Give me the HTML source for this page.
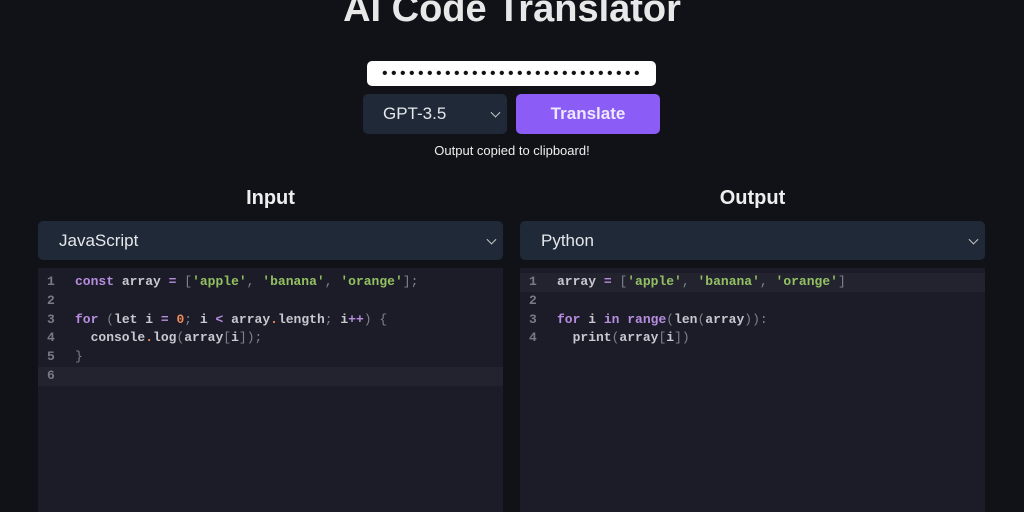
<!DOCTYPE html>
<html><head><style>
body{margin:0;width:1024px;height:512px;background:#111217;font-family:"Liberation Sans",sans-serif;color:#e5e5e5;overflow:hidden;position:relative}
.abs{position:absolute}
h1{position:absolute;top:-12px;left:0;width:1024px;text-align:center;margin:0;font-size:38px;font-weight:bold;color:#e8e8e8}
.key{left:367px;top:61px;width:289px;height:25px;background:#fff;border-radius:5px;color:#111;font-size:16px;line-height:25px;letter-spacing:3.4px;padding-left:15px;box-sizing:border-box;overflow:hidden;white-space:nowrap}
.sel{background:#1f2937;border-radius:5px;color:#e5e7eb;font-size:17px;box-sizing:border-box}
.chev{position:absolute;right:8px;top:50%;width:6px;height:6px;border-right:1.5px solid #ccc;border-bottom:1.5px solid #ccc;transform:translateY(-70%) rotate(45deg)}
.btn{left:516px;top:94px;width:144px;height:40px;background:#8b5cf6;border-radius:5px;color:#ede9fe;font-weight:bold;font-size:17px;text-align:center;line-height:40px}
.h2{font-size:20px;font-weight:bold;text-align:center;color:#eee}
.code{background:#1b1c27;font-family:"Liberation Mono",monospace;font-size:13px;font-weight:bold;color:#c8c8d0}
.ln{position:absolute;left:0;width:100%;height:18.8px;line-height:18.8px;white-space:pre}
.ln b{display:inline-block;width:37px;text-align:left;padding-left:9px;box-sizing:border-box;color:#7a7a84}
.k{color:#b78de0}.s{color:#93c062}.p{color:#7d828b;font-weight:normal}.n{color:#f08a5d}.o{color:#b78de0}
</style></head><body>
<h1>AI Code Translator</h1>
<div class="abs key">•••••••••••••••••••••••••••••</div>
<div class="abs sel" style="left:363px;top:94px;width:144px;height:40px;line-height:40px;padding-left:20px">GPT-3.5<span class="chev"></span></div>
<div class="abs btn">Translate</div>
<div class="abs" style="left:0;width:1024px;top:143px;text-align:center;font-size:13px;color:#eee">Output copied to clipboard!</div>

<div class="abs h2" style="left:38px;width:465px;top:187px">Input</div>
<div class="abs h2" style="left:520px;width:465px;top:187px">Output</div>
<div class="abs sel" style="left:38px;top:221px;width:465px;height:39px;line-height:39px;padding-left:21px">JavaScript<span class="chev"></span></div>
<div class="abs sel" style="left:520px;top:221px;width:465px;height:39px;line-height:39px;padding-left:21px">Python<span class="chev"></span></div>

<div class="abs code" style="left:38px;top:268px;width:465px;height:244px">
<div class="ln" style="top:5px"><b>1</b><span class="k">const</span> array <span class="o">=</span> <span class="p">[</span><span class="s">'apple'</span><span class="p">,</span> <span class="s">'banana'</span><span class="p">,</span> <span class="s">'orange'</span><span class="p">];</span></div>
<div class="ln" style="top:23.8px"><b>2</b></div>
<div class="ln" style="top:42.6px"><b>3</b><span class="k">for</span> <span class="p">(</span>let i <span class="o">=</span> <span class="n">0</span><span class="p">;</span> i <span class="o">&lt;</span> array<span class="n">.</span>length<span class="p">;</span> i<span class="o">++</span><span class="p">)</span> <span class="p">{</span></div>
<div class="ln" style="top:61.4px"><b>4</b>  console<span class="n">.</span>log<span class="p">(</span>array<span class="p">[</span>i<span class="p">]);</span></div>
<div class="ln" style="top:80.2px"><b>5</b><span class="p">}</span></div>
<div class="ln" style="top:99px;background:#22232f"><b>6</b></div>
</div>
<div class="abs code" style="left:520px;top:268px;width:465px;height:244px">
<div class="ln" style="top:5px;background:#22232f"><b>1</b>array <span class="o">=</span> <span class="p">[</span><span class="s">'apple'</span><span class="p">,</span> <span class="s">'banana'</span><span class="p">,</span> <span class="s">'orange'</span><span class="p">]</span></div>
<div class="ln" style="top:23.8px"><b>2</b></div>
<div class="ln" style="top:42.6px"><b>3</b><span class="k">for</span> i <span class="k">in</span> <span class="k">range</span><span class="p">(</span>len<span class="p">(</span>array<span class="p">)):</span></div>
<div class="ln" style="top:61.4px"><b>4</b>  print<span class="p">(</span>array<span class="p">[</span>i<span class="p">])</span></div>
</div>
</body></html>
